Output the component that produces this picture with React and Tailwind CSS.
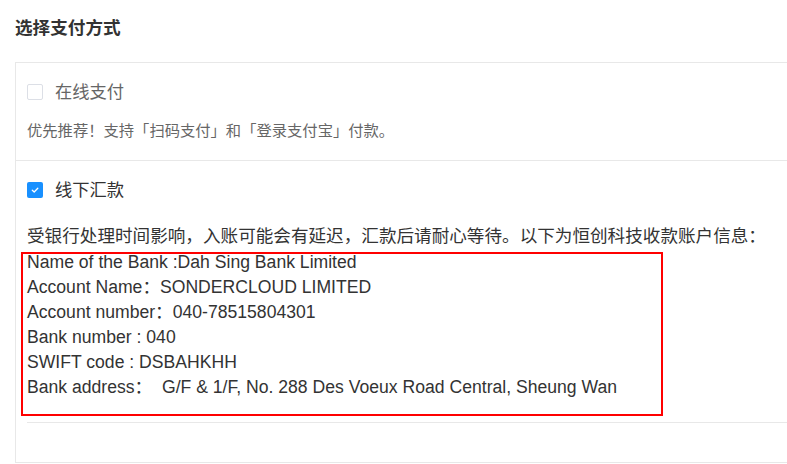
import React from "react";

function Box({ checked }) {
  if (checked) {
    return (
      <span className="flex h-[16px] w-[16px] items-center justify-center rounded-[2px] bg-[#1890ff]">
        <svg width="10" height="10" viewBox="0 0 10 10" fill="none">
          <path d="M2.3 5.2 L4.2 7 L7.8 3.2" stroke="#fff" strokeWidth="1.3" strokeLinecap="round" strokeLinejoin="round" />
        </svg>
      </span>
    );
  }
  return <span className="block h-[16px] w-[16px] rounded-[2px] border border-[#dcdfe6] bg-white" />;
}

const lines = [
  "Name of the Bank :Dah Sing Bank Limited",
  "Account Name：SONDERCLOUD LIMITED",
  "Account number：040-78515804301",
  "Bank number : 040",
  "SWIFT code : DSBAHKHH",
  "Bank address：  G/F & 1/F, No. 288 Des Voeux Road Central, Sheung Wan",
];

export default function App() {
  return (
    <div
      className="h-[464px] w-[787px] overflow-hidden bg-white text-[#333]"
      style={{ fontFamily: '"Liberation Sans", "Noto Sans CJK SC", sans-serif' }}
    >
      <div className="px-[15px] pt-[16px] text-[17.6px] font-bold leading-[24px] text-[#333]">选择支付方式</div>
      <div className="ml-[15px] mt-[22px] border-b border-l border-t border-[#e8e8e8]">
        <div className="pb-[19px] pl-[11px] pt-[17px]">
          <div className="flex h-[24px] items-center gap-[12px]">
            <Box checked={false} />
            <span className="text-[17.3px] leading-[24px] text-[#666]">在线支付</span>
          </div>
          <div className="mt-[17px] text-[15.3px] leading-[20px] text-[#666]">
            优先推荐！支持「扫码支付」和「登录支付宝」付款。
          </div>
        </div>
        <div className="border-t border-[#e8e8e8] pl-[11px] pt-[17px]">
          <div className="flex h-[24px] items-center gap-[12px]">
            <Box checked={true} />
            <span className="text-[17.3px] leading-[24px] text-[#333]">线下汇款</span>
          </div>
          <div className="mt-[22px] text-[17.6px] leading-[25px] text-[#333]">
            受银行处理时间影响，入账可能会有延迟，汇款后请耐心等待。以下为恒创科技收款账户信息：
          </div>
          <div className="ml-[-6px] mt-[3px] w-[642px] border-2 border-[#ff0000] pb-[10px] pl-[4px]">
            {lines.map((l) => (
              <div key={l} className="h-[25px] whitespace-pre text-[17.6px] leading-[16px] text-[#333]">
                {l}
              </div>
            ))}
          </div>
          <div className="mt-[6px] h-[40px] border-t border-[#e8e8e8]" />
        </div>
      </div>
    </div>
  );
}
